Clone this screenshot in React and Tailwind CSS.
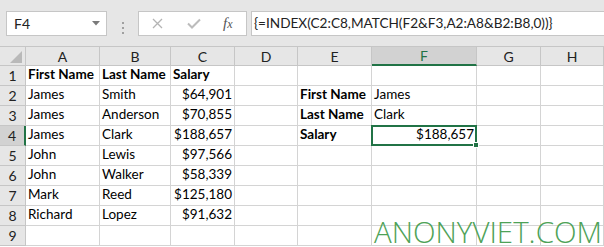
const cols = ["A", "B", "C", "D", "E", "F", "G", "H"];

const rows = [
  { a: "First Name", b: "Last Name", c: "Salary", bold: true },
  { a: "James", b: "Smith", c: "$64,901", e: "First Name", f: "James" },
  { a: "James", b: "Anderson", c: "$70,855", e: "Last Name", f: "Clark" },
  { a: "James", b: "Clark", c: "$188,657", e: "Salary", f: "$188,657", sel: true },
  { a: "John", b: "Lewis", c: "$97,566" },
  { a: "John", b: "Walker", c: "$58,339" },
  { a: "Mark", b: "Reed", c: "$125,180" },
  { a: "Richard", b: "Lopez", c: "$91,632" },
  {},
];

const cell = "h-[20px] border-r border-b border-[#d4d4d4] flex items-end pb-[1px] px-[2px] whitespace-nowrap";

export default function App() {
  return (
    <div
      className="w-[604px] h-[247px] bg-white overflow-hidden relative text-[#000] text-[13.5px]"
      style={{ fontFamily: "Lato, 'Open Sans', sans-serif" }}
    >
      {/* FORMULA BAR */}
      <div className="h-[46px] bg-[#e6e6e6] flex pt-[11px] pl-[6px]">
        <div className="w-[101px] h-[25px] bg-white border border-[#c6c6c6] flex items-center justify-between pl-[7px] pr-[6px]">
          <span className="text-[14px] text-[#222]">F4</span>
          <svg width="8" height="5" viewBox="0 0 8 5">
            <path d="M0 0h8L4 4.5z" fill="#7a7a7a" />
          </svg>
        </div>
        <div className="w-[31px] flex flex-col items-center justify-center gap-[3px] pb-[2px]">
          <div className="w-[2px] h-[2px] bg-[#a0a0a0]" />
          <div className="w-[2px] h-[2px] bg-[#a0a0a0]" />
          <div className="w-[2px] h-[2px] bg-[#a0a0a0]" />
        </div>
        <div className="w-[109px] h-[25px] bg-white border border-[#c6c6c6] flex items-center pl-[13px]">
          <svg width="11" height="11" viewBox="0 0 11 11">
            <path d="M1 1l9 9M10 1l-9 9" stroke="#b4b4b4" strokeWidth="1.3" />
          </svg>
          <svg className="ml-[24px]" width="14" height="11" viewBox="0 0 14 11">
            <path d="M1 5.5l4 4 8-8" stroke="#bcbcbc" strokeWidth="2" fill="none" />
          </svg>
          <span
            className="ml-[22px] italic text-[15px] text-[#555]"
            style={{ fontFamily: "'Liberation Serif', serif" }}
          >
            f<span className="text-[12px]">x</span>
          </span>
        </div>
        <div className="ml-[4px] flex-1 h-[25px] bg-white border border-[#c6c6c6] border-r-0 flex items-center pl-[2px] text-[13.6px] text-[#222]">
          {"{=INDEX(C2:C8,MATCH(F2&F3,A2:A8&B2:B8,0))}"}
        </div>
      </div>

      {/* GRID */}
      <div className="grid grid-cols-[26px_74px_71px_64px_63px_74px_105px_64px_63px]">
        {/* header row */}
        <div className="h-[20px] bg-[#e6e6e6] border-r border-b border-[#c6c6c6] border-t border-t-[#c6c6c6] flex items-end justify-end pr-[3px] pb-[2px]">
          <svg width="12" height="12" viewBox="0 0 12 12">
            <path d="M12 0v12H0z" fill="#b9b9b9" />
          </svg>
        </div>
        {cols.map((c) => (
          <div
            key={c}
            className={`h-[20px] border-t border-t-[#c6c6c6] border-r border-[#c6c6c6] flex items-center justify-center text-[14px] text-[#222] ${
              c === "F"
                ? "bg-[#d2d2d2] border-b-2 border-b-[#217346] text-[#217346]"
                : "bg-[#e6e6e6] border-b border-b-[#c6c6c6]"
            }`}
          >
            {c}
          </div>
        ))}

        {rows.map((r, i) => (
          <Row key={i} n={i + 1} r={r} />
        ))}
      </div>

      {/* WATERMARK */}
      <div
        className="absolute left-[374px] top-[217px] text-[29.5px] text-[#4ea257] leading-none whitespace-nowrap"
        style={{ fontFamily: "'Open Sans', sans-serif", fontWeight: 300 }}
      >
        ANONYVIET.COM
      </div>
    </div>
  );
}

function Row({ n, r }) {
  const b = r.bold ? "font-bold" : "";
  return (
    <>
      <div
        className={`h-[20px] border-b border-[#c6c6c6] flex items-center justify-center text-[14px] text-[#222] ${
          r.sel
            ? "bg-[#d2d2d2] border-r-2 border-r-[#217346]"
            : "bg-[#e6e6e6] border-r border-r-[#c6c6c6]"
        }`}
      >
        {n}
      </div>
      <div className={`${cell} ${b}`}>{r.a}</div>
      <div className={`${cell} ${b}`}>{r.b}</div>
      <div className={`${cell} ${b} ${r.bold ? "" : "justify-end"}`}>{r.c}</div>
      <div className={cell} />
      <div className={`${cell} font-bold`}>{r.e}</div>
      <div className={`${cell} ${r.sel ? "justify-end relative" : ""}`}>
        {r.f}
        {r.sel && (
          <div className="absolute -left-[1px] -top-[1px] w-[106px] h-[21px] border-2 border-[#217346]">
            <div className="absolute -right-[4px] -bottom-[4px] w-[6px] h-[6px] bg-[#217346] border border-white" />
          </div>
        )}
      </div>
      <div className={cell} />
      <div className={cell} />
    </>
  );
}
